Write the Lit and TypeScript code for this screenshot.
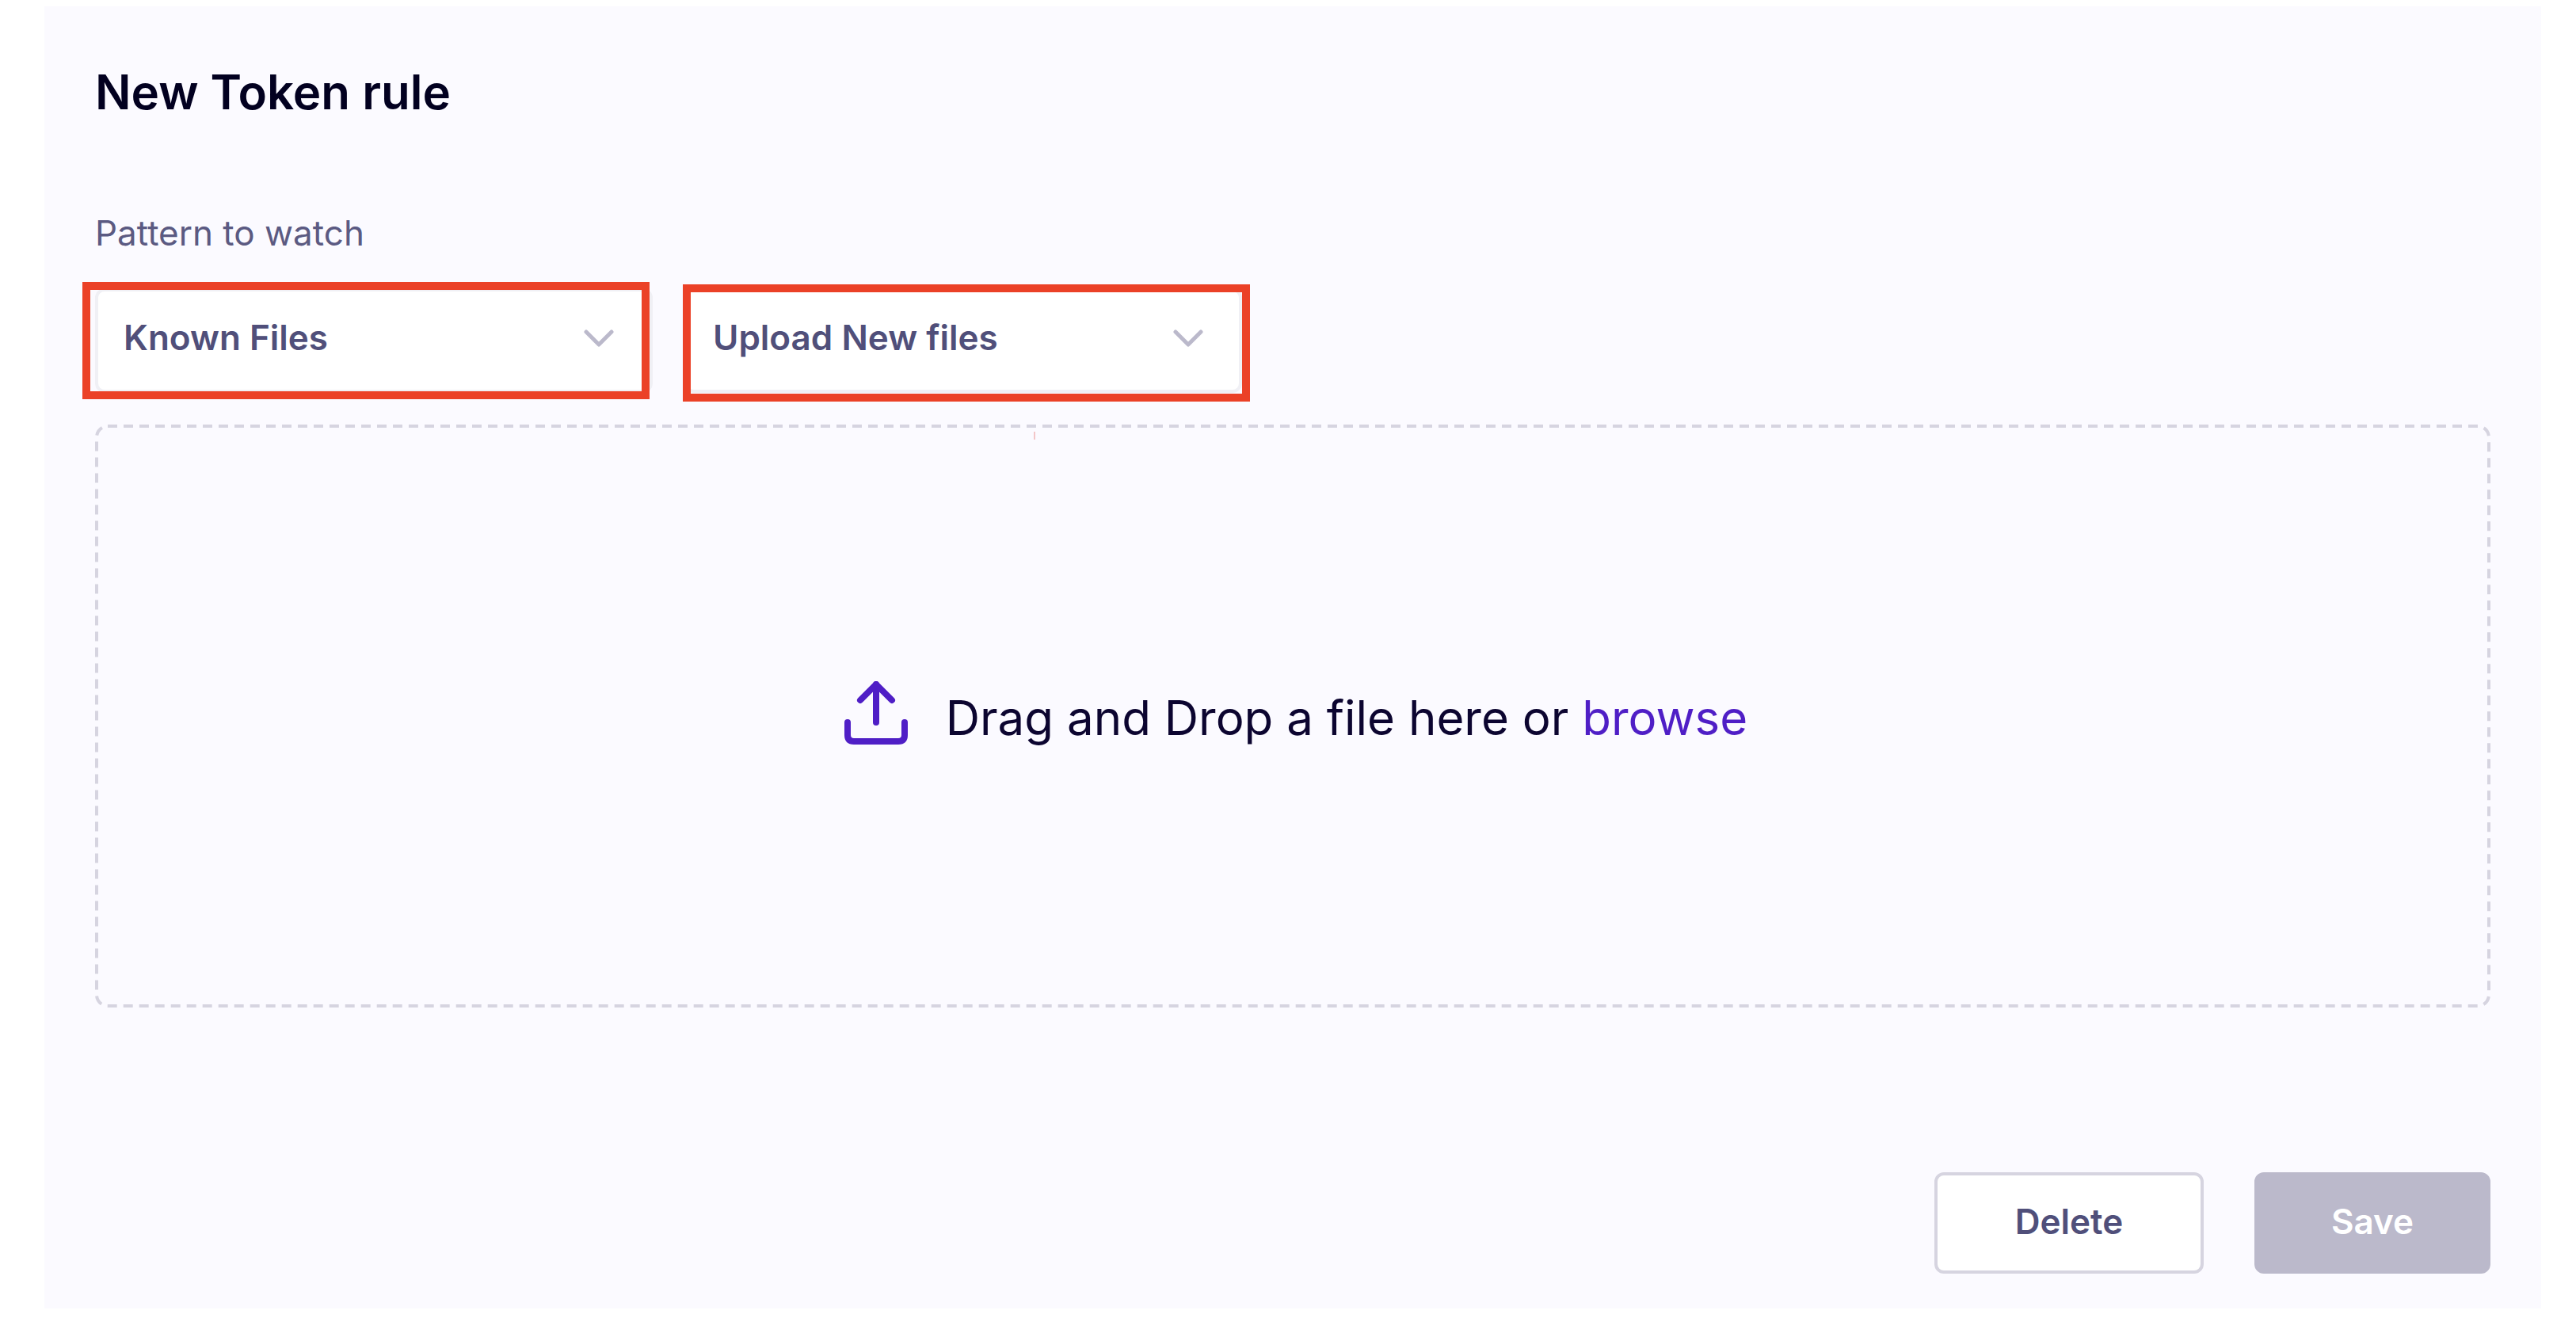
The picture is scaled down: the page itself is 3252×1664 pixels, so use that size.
import { LitElement, html, css } from "lit";
import { customElement } from "lit/decorators.js";

const chevron = html`<svg class="chevron" viewBox="0 0 40 24" aria-hidden="true">
  <path d="M4 3 L20 19 L36 3" fill="none" stroke="currentColor" stroke-width="5" stroke-linecap="round" stroke-linejoin="round" />
</svg>`;

const uploadIcon = html`<svg class="upload" viewBox="0 0 80 92" aria-hidden="true">
  <g fill="none" stroke="currentColor" stroke-width="8" stroke-linecap="round" stroke-linejoin="round">
    <path d="M4 52 V68 Q4 76 12 76 H68 Q76 76 76 68 V52" />
    <path d="M40 52 V4" />
    <path d="M20 24 L40 4 L60 24" />
  </g>
</svg>`;

@customElement("app-root")
export class AppRoot extends LitElement {
  static styles = css`
    :host {
      display: block;
      padding: 8px 44px 12px 56px;
      background: #ffffff;
      font-family: Inter, "Noto Sans", sans-serif;
      color: #04002a;
    }
    .panel {
      display: flex;
      flex-direction: column;
      padding: 72px 64px 44px;
      background: #fbfaff;
    }
    .title {
      margin: 0 0 114px;
      font-size: 60px;
      line-height: 72px;
      font-weight: 600;
      color: #020020;
    }
    .caption {
      align-self: flex-start;
      margin-bottom: 42px;
      font-size: 44px;
      line-height: 56px;
      color: #5b5a82;
    }
    .pickers {
      display: flex;
      gap: 40px;
      margin-bottom: 40px;
    }
    .picker {
      position: relative;
      display: grid;
      align-items: center;
      flex: 0 1 704px;
    }
    .select {
      grid-area: 1 / 1;
      box-sizing: border-box;
      width: 100%;
      height: 132px;
      margin: 0;
      padding: 0 96px 8px 32px;
      appearance: none;
      border: 4px solid #f0f0f5;
      border-radius: 12px;
      background: #ffffff;
      color: #504f7a;
      font: 600 44px/56px Inter, "Noto Sans", sans-serif;
    }
    .chevron {
      grid-area: 1 / 1;
      justify-self: end;
      width: 40px;
      height: 24px;
      margin: 0 48px 4px 0;
      color: #bbb9cb;
      pointer-events: none;
    }
    .mark {
      position: absolute;
      border: 10px solid #eb4127;
      pointer-events: none;
    }
    .mark-known {
      inset: -8px 4px -8px -16px;
    }
    .mark-upload {
      inset: -5px -10px -11px -2px;
    }
    .dropzone {
      position: relative;
      display: flex;
      align-items: center;
      justify-content: center;
      gap: 48px;
      min-height: 732px;
      padding: 4px 0 0 8px;
      margin-bottom: 208px;
    }
    .outline {
      position: absolute;
      inset: 0;
      width: 100%;
      height: 100%;
      pointer-events: none;
    }
    .dashes {
      width: calc(100% - 4px);
      height: calc(100% - 4px);
    }
    .tick {
      position: absolute;
      top: 9px;
      left: 1185px;
      width: 2px;
      height: 10px;
      background: #f3c6c8;
    }
    .upload {
      width: 80px;
      height: 92px;
      color: #4f1ec6;
    }
    .hint {
      margin: 0;
      font-size: 60px;
      line-height: 72px;
      color: #0c0530;
    }
    .browse {
      color: #4f1ec6;
      text-decoration: none;
    }
    .actions {
      display: flex;
      justify-content: flex-end;
      gap: 64px;
    }
    .button {
      box-sizing: border-box;
      width: 340px;
      height: 128px;
      margin: 0;
      padding: 0 0 4px;
      border: 4px solid #d6d4e0;
      border-radius: 12px;
      background: #ffffff;
      color: #504f7a;
      font: 600 44px/56px Inter, "Noto Sans", sans-serif;
    }
    .save {
      width: 298px;
      border-color: #bbb9cb;
      background: #bbb9cb;
      color: #ffffff;
    }
  `;

  render() {
    return html`<main class="panel">
      <h1 class="title">New Token rule</h1>
      <label class="caption" for="pattern">Pattern to watch</label>
      <div class="pickers">
        <div class="picker">
          <select class="select" id="pattern">
            <option>Known Files</option>
          </select>
          ${chevron}
          <div class="mark mark-known"></div>
        </div>
        <div class="picker">
          <select class="select" aria-label="File source">
            <option>Upload New files</option>
          </select>
          ${chevron}
          <div class="mark mark-upload"></div>
        </div>
      </div>
      <section class="dropzone">
        <svg class="outline" aria-hidden="true">
          <rect class="dashes" x="2" y="2" rx="14" fill="none" stroke="#d6d4e0" stroke-width="4" stroke-dasharray="12 8" />
        </svg>
        <span class="tick"></span>
        ${uploadIcon}
        <p class="hint">Drag and Drop a file here or <a class="browse" href="#browse">browse</a></p>
      </section>
      <div class="actions">
        <button class="button" type="button">Delete</button>
        <button class="button save" type="button">Save</button>
      </div>
    </main>`;
  }
}
